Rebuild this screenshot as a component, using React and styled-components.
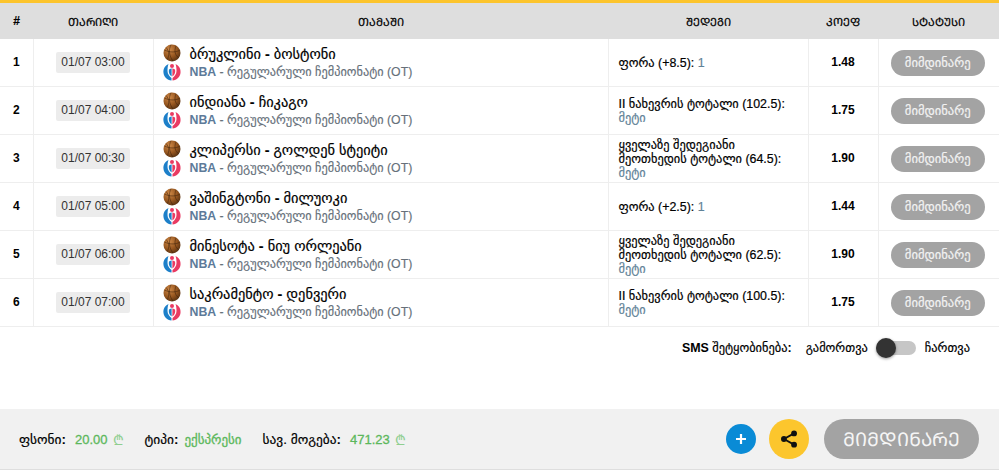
import React from "react";
import styled, { createGlobalStyle } from "styled-components";

const rows = [
  { n: 1, date: "01/07 03:00", game: ["ბრუკლინი", "ბოსტონი"], res: "ფორა (+8.5):", val: "1", inline: true, coef: "1.48" },
  { n: 2, date: "01/07 04:00", game: ["ინდიანა", "ჩიკაგო"], res: "II ნახევრის ტოტალი (102.5):", val: "მეტი", coef: "1.75" },
  { n: 3, date: "01/07 00:30", game: ["კლიპერსი", "გოლდენ სტეიტი"], res: "ყველაზე შედეგიანი მეოთხედის ტოტალი (64.5):", val: "მეტი", coef: "1.90" },
  { n: 4, date: "01/07 05:00", game: ["ვაშინგტონი", "მილუოკი"], res: "ფორა (+2.5):", val: "1", inline: true, coef: "1.44" },
  { n: 5, date: "01/07 06:00", game: ["მინესოტა", "ნიუ ორლეანი"], res: "ყველაზე შედეგიანი მეოთხედის ტოტალი (62.5):", val: "მეტი", coef: "1.90" },
  { n: 6, date: "01/07 07:00", game: ["საკრამენტო", "დენვერი"], res: "II ნახევრის ტოტალი (100.5):", val: "მეტი", coef: "1.75" },
];

const Global = createGlobalStyle`
  html, body { margin: 0; padding: 0; background: #fff; }
  body { font-family: "Liberation Sans", "DejaVu Sans", sans-serif; color: #000; }
`;

const Page = styled.div`
  width: 999px;
  height: 470px;
  display: flex;
  flex-direction: column;
  border-top: 3px solid #fcc42c;
  box-sizing: border-box;
  overflow: hidden;
`;

const Table = styled.table`
  width: 999px;
  border-collapse: collapse;
  table-layout: fixed;
`;

const Th = styled.th`
  height: 36px;
  padding: 0;
  background: #dedede;
  font-size: 11.2px;
  font-weight: 400;
  text-align: center;
  -webkit-text-stroke: 0.2px #000;
  width: ${(p) => p.$w}px;
`;

const HashTh = styled(Th)`
  font-size: 12px;
  font-weight: 700;
`;

const Td = styled.td`
  height: 47px;
  padding: 0;
  border-bottom: 1px solid #eeeeee;
  border-right: 1px solid #eeeeee;
  font-size: 12px;
  text-align: center;
  &:last-child { border-right: 0; }
`;

const BoldTd = styled(Td)`
  height: 45px;
  padding-bottom: 2px;
  font-weight: 700;
`;

const ResultTd = styled(Td)`
  text-align: left;
  padding: 0 10px;
  line-height: 14px;
  font-size: 12.4px;
  -webkit-text-stroke: 0.2px #000;
`;

const DateBadge = styled.span`
  display: inline-block;
  background: #ececec;
  border-radius: 2px;
  padding: 0 5px;
  height: 21px;
  line-height: 21px;
  color: #333;
`;

const Game = styled.div`
  display: grid;
  grid-template-columns: 18px 1fr;
  column-gap: 9px;
  row-gap: 1px;
  padding-left: 9px;
  text-align: left;
  align-items: center;
`;

const Teams = styled.div`
  font-size: 14.4px;
  line-height: 15px;
  padding-top: 2px;
  -webkit-text-stroke: 0.2px #000;
  b { font-weight: 700; }
`;

const League = styled.div`
  font-size: 12.3px;
  color: #66707a;
  line-height: 16px;
  -webkit-text-stroke: 0.15px #66707a;
  b { color: #5d7a99; -webkit-text-stroke: 0; }
`;

const Val = styled.span`
  color: #5f8297;
  -webkit-text-stroke: 0.2px #5f8297;
`;

const StatusPill = styled.span`
  display: inline-block;
  vertical-align: middle;
  width: 94px;
  height: 26px;
  line-height: 26px;
  margin-right: 2px;
  border-radius: 13px;
  background: #a3a3a3;
  color: #f2f2f2;
  font-size: 12.6px;
  -webkit-text-stroke: 0.2px #f2f2f2;
`;

const SmsRow = styled.div`
  display: flex;
  justify-content: flex-end;
  align-items: center;
  height: 41px;
  padding-right: 29px;
  font-size: 12.4px;
  -webkit-text-stroke: 0.2px #000;
`;

const SmsLabel = styled.span`
  margin-right: 14px;
  b { font-weight: 700; -webkit-text-stroke: 0; }
`;

const Track = styled.span`
  position: relative;
  display: inline-block;
  width: 40px;
  height: 14px;
  margin: 0 9px 0 8px;
  border-radius: 7px;
  background: #c6c6c6;
`;

const Knob = styled.span`
  position: absolute;
  left: 0;
  top: -3px;
  width: 20px;
  height: 20px;
  border-radius: 50%;
  background: #333;
  box-shadow: 0 1px 3px rgba(0, 0, 0, 0.4);
`;

const Footer = styled.div`
  margin-top: auto;
  height: 61px;
  box-sizing: border-box;
  display: flex;
  align-items: center;
  padding: 0 20px 0 19px;
  background: #f1f1f1;
  border-bottom: 1px solid #dedede;
  font-size: 13.4px;
`;

const Stat = styled.span`
  margin-right: 21px;
  display: flex;
  gap: ${(p) => p.$gap || 9}px;
  align-items: center;
  -webkit-text-stroke: 0.2px #000;
  b { font-weight: 700; -webkit-text-stroke: 0; }
`;

const Green = styled.span`
  color: #5cb85c;
  font-size: 13px;
  -webkit-text-stroke: 0.3px #5cb85c;
`;

const Lari = styled.span`
  color: #8fce8f;
  font-size: 14px;
  margin-left: -4px;
  -webkit-text-stroke: 0;
`;

const Actions = styled.div`
  margin-left: auto;
  display: flex;
  align-items: center;
`;

const Round = styled.button`
  width: ${(p) => p.$size}px;
  height: ${(p) => p.$size}px;
  border: 0;
  padding: 0;
  border-radius: 50%;
  background: ${(p) => p.$bg};
  display: flex;
  align-items: center;
  justify-content: center;
  margin-right: ${(p) => p.$mr}px;
`;

const BigPill = styled.button`
  width: 155px;
  height: 40px;
  border: 0;
  padding: 0;
  border-radius: 20px;
  background: #a3a3a3;
  color: #f5f5f5;
  font-family: inherit;
  font-size: 19px;
`;

const Ball = () => (
  <svg width="18" height="18" viewBox="0 0 18 18">
    <defs>
      <radialGradient id="ballFill" cx="0.35" cy="0.3" r="0.8">
        <stop offset="0" stopColor="#d08a48" />
        <stop offset="0.55" stopColor="#96561f" />
        <stop offset="1" stopColor="#4e2c10" />
      </radialGradient>
    </defs>
    <circle cx="9" cy="9" r="8.500" fill="url(#ballFill)" />
    <g fill="none" stroke="#3a1f0a" strokeWidth="0.7" opacity="0.75">
      <path d="M1.500 6c5 2.500 10 2.500 15 .5M8 .7c-2.500 5-2 11 2 16.500M3 3.500c3 3 3.500 7 1.500 12M13 1.800c-2 5-1 10 3 12" />
    </g>
  </svg>
);

const Nba = () => (
  <svg width="18" height="18" viewBox="0 0 18 18">
    <path d="M5.500 1C2 2.500 0 6 .5 10c.5 4 3.500 7 8 7.500V15C6.500 13.500 4.500 11 4.500 8c0-2.500.2-5 1-7z" fill="#1c7fc9" />
    <path d="M12.500 1c3.500 1.500 5.500 5 5 9-.5 4-3.500 7-8 7.500V15c2-1.500 4-4 4-7 0-2.500-.2-5-1-7z" fill="#e93a62" />
    <circle cx="9" cy="3" r="2" fill="#e93a62" />
    <path d="M6 6.500l2.600-1.300v8.300L7 12C6 10.500 5.500 8.500 6 6.500z" fill="#1c7fc9" />
    <path d="M12 6.500L9.400 5.200v8.300L11 12c1-1.500 1.500-3.500 1-5.500z" fill="#e93a62" />
  </svg>
);

export default function App() {
  return (
    <Page>
      <Global />
      <Table>
        <thead>
          <tr>
            <HashTh $w={33}>#</HashTh>
            <Th $w={120}>ᲗᲐᲠᲘᲦᲘ</Th>
            <Th $w={455}>ᲗᲐᲛᲐᲨᲘ</Th>
            <Th $w={200}>ᲨᲔᲓᲔᲒᲘ</Th>
            <Th $w={70}>ᲙᲝᲔᲤ</Th>
            <Th $w={121}>ᲡᲢᲐᲢᲣᲡᲘ</Th>
          </tr>
        </thead>
        <tbody>
          {rows.map((r) => (
            <tr key={r.n}>
              <BoldTd>{r.n}</BoldTd>
              <Td>
                <DateBadge>{r.date}</DateBadge>
              </Td>
              <Td>
                <Game>
                  <Ball />
                  <Teams>
                    {r.game[0]} <b>-</b> {r.game[1]}
                  </Teams>
                  <Nba />
                  <League>
                    <b>NBA</b> - რეგულარული ჩემპიონატი (OT)
                  </League>
                </Game>
              </Td>
              <ResultTd>
                {r.res}
                {r.inline ? " " : <br />}
                <Val>{r.val}</Val>
              </ResultTd>
              <BoldTd>{r.coef}</BoldTd>
              <Td>
                <StatusPill>მიმდინარე</StatusPill>
              </Td>
            </tr>
          ))}
        </tbody>
      </Table>
      <SmsRow>
        <SmsLabel>
          <b>SMS</b> შეტყობინება<b>:</b>
        </SmsLabel>
        გამორთვა
        <Track>
          <Knob />
        </Track>
        ჩართვა
      </SmsRow>
      <Footer>
        <Stat>
          <span>ფსონი<b>:</b></span> <Green>20.00</Green> <Lari>₾</Lari>
        </Stat>
        <Stat $gap={6}>
          <span>ტიპი<b>:</b></span> <Green>ექსპრესი</Green>
        </Stat>
        <Stat>
          <span>სავ. მოგება<b>:</b></span> <Green>471.23</Green> <Lari>₾</Lari>
        </Stat>
        <Actions>
          <Round $size={30} $bg="#0a8bd6" $mr={13}>
            <svg width="12" height="12" viewBox="0 0 12 12" stroke="#fff" strokeWidth="2.200">
              <path d="M6 1v10M1 6h10" />
            </svg>
          </Round>
          <Round $size={40} $bg="#fcc62d" $mr={15}>
            <svg width="18" height="18" viewBox="0 0 16 16" fill="#111" stroke="#111" strokeWidth="1.600">
              <circle cx="12.500" cy="3" r="1.800" />
              <circle cx="3.500" cy="8" r="1.800" />
              <circle cx="12.500" cy="13" r="1.800" />
              <path d="M12.500 3l-9 5 9 5" fill="none" />
            </svg>
          </Round>
          <BigPill>ᲛᲘᲛᲓᲘᲜᲐᲠᲔ</BigPill>
        </Actions>
      </Footer>
    </Page>
  );
}
